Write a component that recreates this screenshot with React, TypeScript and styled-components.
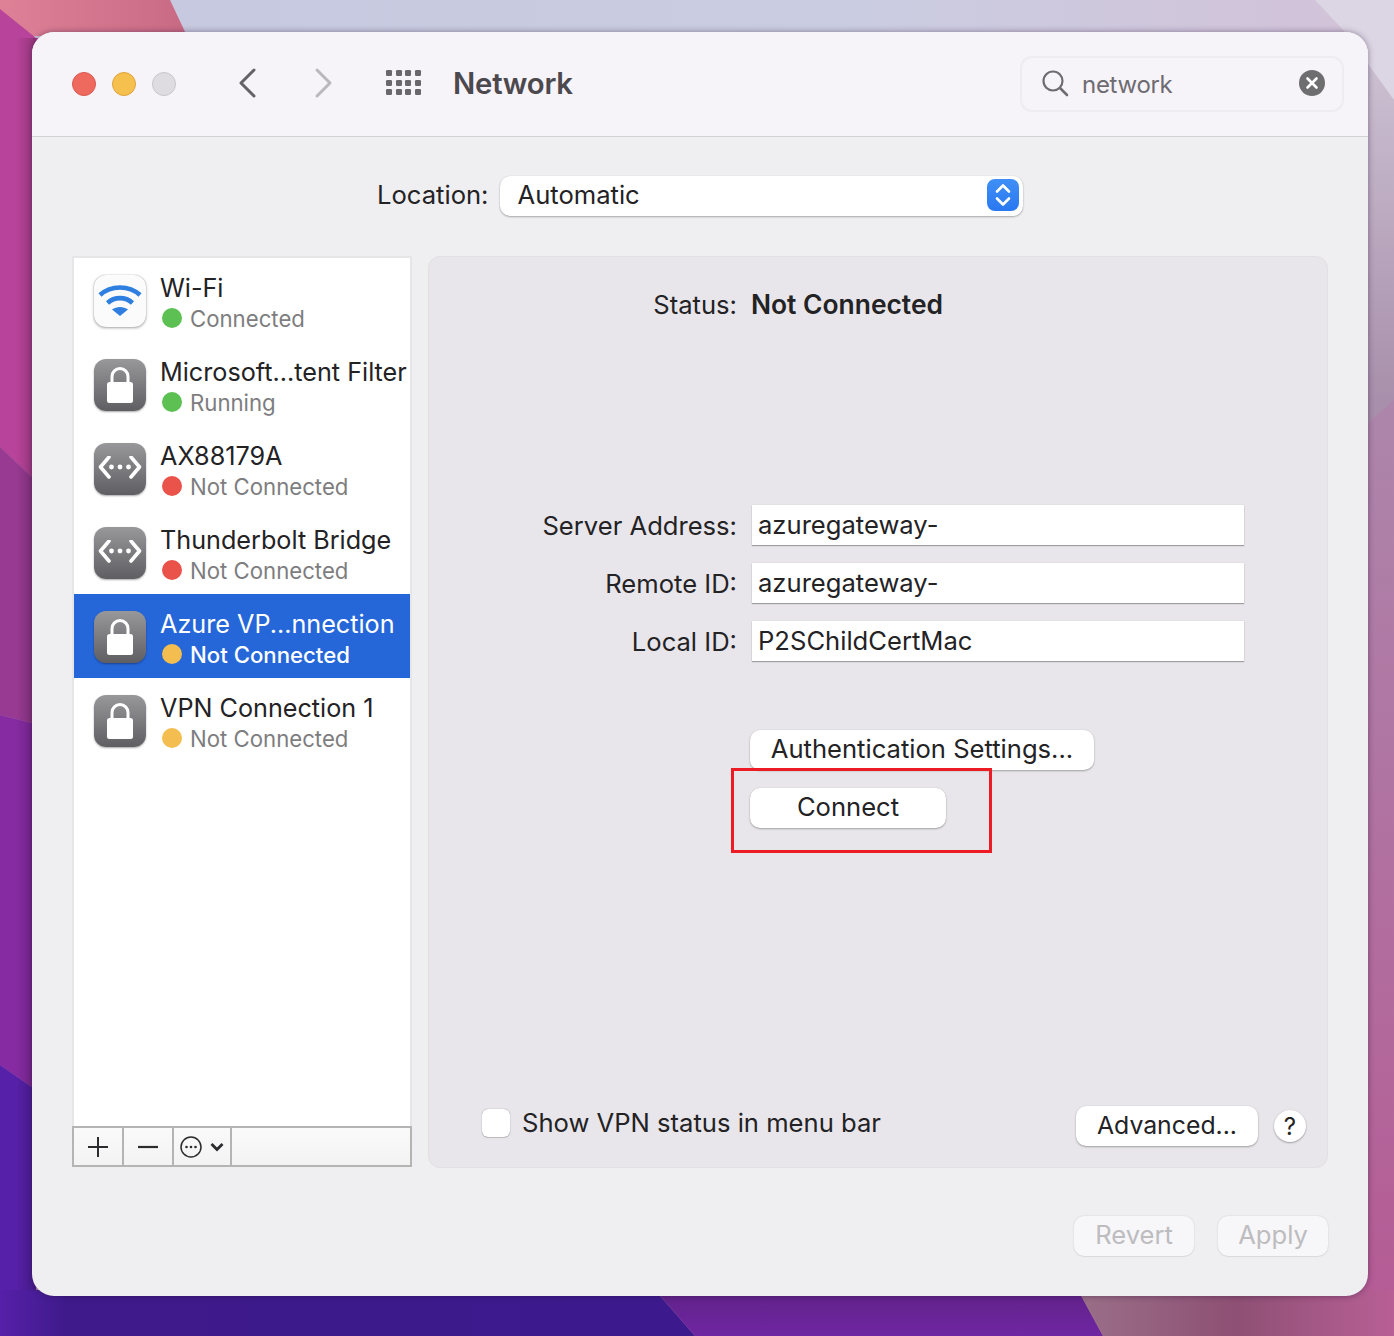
import React from 'react';
import styled, { createGlobalStyle } from 'styled-components';

const GlobalStyle = createGlobalStyle`
  html, body {
    margin: 0;
    padding: 0;
    background: #7a2d9b;
  }
  * {
    box-sizing: border-box;
  }
`;

const Desktop = styled.div`
  position: relative;
  width: 1394px;
  height: 1336px;
  padding: 32px 26px 40px 32px;
  overflow: hidden;
  font-family: Inter, "Liberation Sans", sans-serif;
  color: #232225;
`;

const WallpaperArt = styled.svg`
  position: absolute;
  inset: 0;
`;

const Window = styled.div`
  position: relative;
  width: 1336px;
  height: 1264px;
  display: flex;
  flex-direction: column;
  border-radius: 22px;
  overflow: hidden;
  background: #efeef1;
  box-shadow: 0 0 6px rgba(40, 20, 50, 0.45);
`;

const TitleBar = styled.header`
  height: 105px;
  flex: none;
  display: flex;
  align-items: center;
  padding: 0 24px 0 40px;
  background: #f6f3f9;
  border-bottom: 1px solid #d2d0d4;
`;

const Lights = styled.div`
  display: flex;
  gap: 16px;
`;

const Light = styled.span<{ $fill: string; $edge: string }>`
  width: 24px;
  height: 24px;
  border-radius: 50%;
  background: ${(p) => p.$fill};
  border: 1px solid ${(p) => p.$edge};
`;

const NavIcon = styled.svg<{ $left: number }>`
  flex: none;
  display: block;
  margin: 0 0 2px ${(p) => p.$left}px;
`;

const Title = styled.h1`
  margin: 0 0 2px 30px;
  font-size: 29.3px;
  font-weight: 600;
  color: #4b494e;
  letter-spacing: -0.2px;
`;

const SearchBox = styled.div`
  width: 324px;
  height: 56px;
  margin-left: auto;
  display: flex;
  align-items: center;
  padding: 0 17px 0 19px;
  border: 2px solid #eeebf1;
  border-radius: 12px;
`;

const SearchText = styled.span`
  margin: 1px 0 0 13px;
  font-size: 24px;
  letter-spacing: -0.3px;
  color: #6e6c71;
  flex: 1;
`;

const Content = styled.main`
  flex: 1;
  display: flex;
  flex-direction: column;
  padding: 38px 40px 40px;
`;

const LocationRow = styled.div`
  height: 41px;
  display: flex;
  align-items: center;
  padding-left: 305px;
  gap: 12px;
`;

const FieldLabel = styled.span`
  font-size: 25.6px;
  white-space: nowrap;
  padding-bottom: 2px;
`;

const Select = styled.div`
  width: 523px;
  height: 40px;
  display: flex;
  align-items: center;
  justify-content: space-between;
  padding: 0 4px 2px 17px;
  background: #fff;
  border-radius: 10px;
  font-size: 25.6px;
  box-shadow: 0 1px 2px rgba(0, 0, 0, 0.3), 0 0 1px rgba(0, 0, 0, 0.15);
`;

const Stepper = styled.span`
  width: 32px;
  height: 32px;
  display: flex;
  align-items: center;
  justify-content: center;
  border-radius: 8px;
  background: linear-gradient(#3f8ff7, #2a78f0);
`;

const Columns = styled.div`
  height: 912px;
  margin-top: 40px;
  display: flex;
  gap: 16px;
`;

const ServiceColumn = styled.section`
  width: 340px;
  flex: none;
  display: flex;
  flex-direction: column;
  margin-bottom: 1px;
  background: #fff;
  border: 2px solid #e6e5e8;
  border-bottom: 0;
`;

const ServiceList = styled.div`
  flex: 1;
`;

const Row = styled.div<{ $active?: boolean }>`
  height: 84px;
  display: flex;
  padding: 17px 0 0 20px;
  background: ${(p) => (p.$active ? '#2566d9' : 'transparent')};
  color: ${(p) => (p.$active ? '#fff' : '#232225')};
`;

const ServiceIcon = styled.div<{ $light?: boolean }>`
  width: 52px;
  height: 52px;
  flex: none;
  display: flex;
  align-items: center;
  justify-content: center;
  border-radius: 12px;
  background: ${(p) => (p.$light ? '#fbfbfc' : 'linear-gradient(#98989b, #5f5f63)')};
  box-shadow: ${(p) => (p.$light
    ? '0 1px 3px rgba(0, 0, 0, 0.35), 0 0 1px rgba(0, 0, 0, 0.3)'
    : '0 1px 2px rgba(0, 0, 0, 0.35)')};
`;

const RowText = styled.div`
  margin: -2px 0 0 14px;
  white-space: nowrap;
`;

const RowName = styled.div`
  font-size: 25.2px;
  line-height: 31px;
`;

const RowStatus = styled.div<{ $active?: boolean }>`
  display: flex;
  align-items: center;
  gap: 8px;
  padding-left: 2px;
  height: 28px;
  font-size: 22.2px;
  color: ${(p) => (p.$active ? '#fff' : '#7d7d80')};
  font-weight: ${(p) => (p.$active ? 500 : 400)};
`;

const Dot = styled.span<{ $color: string }>`
  width: 20px;
  height: 20px;
  border-radius: 50%;
  background: ${(p) => p.$color};
`;

const ListToolbar = styled.div`
  height: 41px;
  flex: none;
  display: flex;
  margin: 0 -2px;
  border: 2px solid #b4b4b4;
  background: linear-gradient(#fafafa, #f3f3f3);
`;

const ToolCell = styled.div<{ $width?: number }>`
  width: ${(p) => (p.$width ? `${p.$width}px` : 'auto')};
  flex: ${(p) => (p.$width ? 'none' : 1)};
  display: flex;
  align-items: center;
  justify-content: center;
  gap: 8px;
  border-right: 2px solid #b4b4b4;
  &:last-child {
    border-right: 0;
  }
`;

const DetailPanel = styled.section`
  flex: 1;
  display: flex;
  flex-direction: column;
  background: #e8e6ea;
  border: 1px solid #e1e0e3;
  border-radius: 12px;
  padding-top: 31px;
`;

const FormGrid = styled.div<{ $top?: number }>`
  display: grid;
  grid-template-columns: 308px 494px;
  column-gap: 14px;
  row-gap: 18px;
  align-items: center;
  margin-top: ${(p) => p.$top || 0}px;
`;

const RightLabel = styled.span`
  font-size: 25.6px;
  text-align: right;
  white-space: nowrap;
`;

const StatusValue = styled.span`
  font-size: 26.4px;
  font-weight: 600;
`;

const TextField = styled.div`
  height: 40px;
  margin: 0 1px;
  display: flex;
  align-items: center;
  padding: 0 0 1px 6px;
  font-size: 25.6px;
  background: #fff;
  box-shadow: 0 1px 1px rgba(0, 0, 0, 0.3), 0 0 1px rgba(0, 0, 0, 0.12);
`;

const ButtonStack = styled.div`
  display: flex;
  flex-direction: column;
  align-items: flex-start;
  gap: 18px;
  margin: 69px 0 0 321px;
`;

const Button = styled.div<{ $width: number; $size?: number }>`
  width: ${(p) => p.$width}px;
  height: 40px;
  flex: none;
  display: flex;
  align-items: center;
  justify-content: center;
  padding-bottom: 3px;
  background: #fff;
  border-radius: 10px;
  font-size: ${(p) => p.$size || 25.6}px;
  white-space: nowrap;
  box-shadow: 0 1px 2px rgba(0, 0, 0, 0.3), 0 0 1px rgba(0, 0, 0, 0.15);
`;

const Annotation = styled.div`
  position: absolute;
  left: 699px;
  top: 736px;
  width: 261px;
  height: 85px;
  border: 3px solid #ed1c24;
`;

const PanelFooter = styled.div`
  margin-top: auto;
  height: 40px;
  margin-bottom: 21px;
  display: flex;
  align-items: center;
  padding: 0 21px 0 53px;
`;

const Checkbox = styled.span`
  width: 28px;
  height: 28px;
  margin-top: -6px;
  background: #fff;
  border-radius: 6px;
  box-shadow: 0 0 1px rgba(0, 0, 0, 0.5), 0 1px 1px rgba(0, 0, 0, 0.15);
`;

const CheckLabel = styled.span`
  margin: -8px auto 0 12px;
  font-size: 25.6px;
`;

const HelpButton = styled.div`
  width: 32px;
  height: 32px;
  margin-left: 16px;
  display: flex;
  align-items: center;
  justify-content: center;
  border-radius: 50%;
  background: #fff;
  font-size: 24px;
  box-shadow: 0 1px 2px rgba(0, 0, 0, 0.3), 0 0 1px rgba(0, 0, 0, 0.15);
`;

const WindowActions = styled.div`
  margin-top: 48px;
  display: flex;
  justify-content: flex-end;
  gap: 24px;
`;

const DisabledButton = styled(Button)`
  background: #f7f6f9;
  color: #bdbcbf;
  box-shadow: 0 0 2px rgba(0, 0, 0, 0.14), 0 1px 1px rgba(0, 0, 0, 0.05);
`;

const Wallpaper = () => (
  <WallpaperArt width="1394" height="1336" viewBox="0 0 1394 1336">
    <defs>
      <linearGradient id="sky" x1="0" y1="0" x2="1" y2="0">
        <stop offset="0" stopColor="#c5c8de" />
        <stop offset="0.6" stopColor="#cacde2" />
        <stop offset="1" stopColor="#d3c2d8" />
      </linearGradient>
      <linearGradient id="right" x1="0" y1="0" x2="0" y2="1">
        <stop offset="0" stopColor="#d2c9d9" />
        <stop offset="0.3" stopColor="#a88fab" />
        <stop offset="1" stopColor="#a87fa0" />
      </linearGradient>
      <linearGradient id="rightLow" x1="0" y1="0" x2="0" y2="1">
        <stop offset="0" stopColor="#ad86ab" />
        <stop offset="1" stopColor="#b55a94" />
      </linearGradient>
      <linearGradient id="corner" x1="0" y1="0" x2="1" y2="0">
        <stop offset="0" stopColor="#9a6f88" />
        <stop offset="0.5" stopColor="#8e5074" />
        <stop offset="1" stopColor="#b85f96" />
      </linearGradient>
      <linearGradient id="blush" x1="0" y1="0" x2="1" y2="0">
        <stop offset="0" stopColor="#de8197" />
        <stop offset="1" stopColor="#c96a85" />
      </linearGradient>
      <linearGradient id="edge" x1="0" y1="0" x2="1" y2="0">
        <stop offset="0" stopColor="#000" stopOpacity="0" />
        <stop offset="1" stopColor="#000" stopOpacity="0.2" />
      </linearGradient>
      <linearGradient id="deep" x1="0" y1="0" x2="1" y2="0">
        <stop offset="0" stopColor="#5620a8" />
        <stop offset="0.1" stopColor="#3e1a8a" />
        <stop offset="1" stopColor="#3c1a8e" />
      </linearGradient>
      <linearGradient id="violet" x1="0" y1="0" x2="0" y2="1">
        <stop offset="0" stopColor="#5f2288" />
        <stop offset="1" stopColor="#7026a2" />
      </linearGradient>
    </defs>
    <rect width="1394" height="1336" fill="url(#right)" />
    <polygon points="1394,400 1360,430 1360,1336 1394,1336" fill="url(#rightLow)" />
    <polygon points="0,0 1394,0 1394,32 0,32" fill="url(#sky)" />
    <polygon points="1315,0 1394,0 1394,100 1345,32" fill="#dcd6e4" />
    <polygon points="0,0 170,0 187,36 0,36" fill="url(#blush)" />
    <polygon points="0,9 36,38 60,38 60,60 36,60 36,481 0,447" fill="#b8439a" />
    <polygon points="0,447 36,481 36,724 0,715" fill="#983a92" />
    <polygon points="0,715 36,724 36,1090 0,1065" fill="#862ba2" />
    <polygon points="0,1065 36,1090 36,1336 0,1336" fill="#5620a8" />
    <rect x="16" y="38" width="20" height="1252" fill="url(#edge)" />
    <polygon points="0,1290 655,1290 695,1336 0,1336" fill="url(#deep)" />
    <polygon points="655,1290 1078,1290 1103,1336 695,1336" fill="url(#violet)" />
    <polygon points="1078,1290 1394,1290 1394,1336 1103,1336" fill="url(#corner)" />
  </WallpaperArt>
);

const LockGlyph = () => (
  <svg width="26" height="36" viewBox="0 0 26 36">
    <path d="M5 17V9.500a8 8 0 0 1 16 0V17" fill="none" stroke="#fff" strokeWidth="3" />
    <rect x="0" y="15" width="26" height="21" rx="2.500" fill="#fff" />
  </svg>
);

const BridgeGlyph = () => (
  <svg width="44" height="26" viewBox="0 2 44 26">
    <path d="M11 3 2.500 13l8.500 10M33 3l8.500 10L33 23" fill="none" stroke="#fff" strokeWidth="3.600" strokeLinecap="round" strokeLinejoin="round" />
    <circle cx="13.500" cy="13" r="2.400" fill="#fff" />
    <circle cx="22" cy="13" r="2.400" fill="#fff" />
    <circle cx="30.500" cy="13" r="2.400" fill="#fff" />
  </svg>
);

const WifiGlyph = () => (
  <svg width="44" height="34" viewBox="0 0 44 34">
    <path d="M2 11C13 1 31 1 42 11" fill="none" stroke="#2e7fdf" strokeWidth="4.600" />
    <path d="M9.500 19c7-6.500 18-6.500 25 0" fill="none" stroke="#2e7fdf" strokeWidth="4.600" />
    <path d="M22 32 14 25.500c4.500-3.500 11.500-3.500 16 0z" fill="#2e7fdf" />
  </svg>
);

type RowData = {
  name: string;
  status: string;
  dot: string;
  icon: 'wifi' | 'lock' | 'bridge';
  active?: boolean;
};

const services: RowData[] = [
  { name: 'Wi-Fi', status: 'Connected', dot: '#5cc152', icon: 'wifi' },
  { name: 'Microsoft...tent Filter', status: 'Running', dot: '#5cc152', icon: 'lock' },
  { name: 'AX88179A', status: 'Not Connected', dot: '#e9534a', icon: 'bridge' },
  { name: 'Thunderbolt Bridge', status: 'Not Connected', dot: '#e9534a', icon: 'bridge' },
  { name: 'Azure VP...nnection', status: 'Not Connected', dot: '#f4bd50', icon: 'lock', active: true },
  { name: 'VPN Connection 1', status: 'Not Connected', dot: '#f4bd50', icon: 'lock' },
];

const App = () => (
  <Desktop>
    <GlobalStyle />
    <Wallpaper />
    <Window>
      <TitleBar>
        <Lights>
          <Light $fill="#ee6a5f" $edge="#d9584e" />
          <Light $fill="#f6c04f" $edge="#dfa63a" />
          <Light $fill="#dfdce1" $edge="#c9c6cb" />
        </Lights>
        <NavIcon $left={62} width="20" height="32" viewBox="0 0 20 32">
          <path d="M16 3 3 16l13 13" fill="none" stroke="#646266" strokeWidth="3" strokeLinecap="round" strokeLinejoin="round" />
        </NavIcon>
        <NavIcon $left={55} width="20" height="32" viewBox="0 0 20 32">
          <path d="M4 3l13 13L4 29" fill="none" stroke="#bab8bd" strokeWidth="3" strokeLinecap="round" strokeLinejoin="round" />
        </NavIcon>
        <NavIcon $left={52} width="38" height="28" viewBox="0 0 38 28">
          {[1, 11, 20, 30].map((x) => [1, 11, 20].map((y) => (
            <rect key={`${x}-${y}`} x={x} y={y} width="6" height="6" rx="1.2" fill="#69676c" />
          )))}
        </NavIcon>
        <Title>Network</Title>
        <SearchBox>
          <NavIcon $left={0} width="28" height="28" viewBox="0 0 28 28">
            <circle cx="12" cy="12" r="9.500" fill="none" stroke="#6e6c71" strokeWidth="2.200" />
            <path d="M19 19l7 7" stroke="#6e6c71" strokeWidth="2.600" strokeLinecap="round" />
          </NavIcon>
          <SearchText>network</SearchText>
          <NavIcon $left={0} width="26" height="26" viewBox="0 0 26 26">
            <circle cx="13" cy="13" r="13" fill="#6e6d70" />
            <path d="M8.500 8.500l9 9M17.500 8.500l-9 9" stroke="#fff" strokeWidth="2.600" strokeLinecap="round" />
          </NavIcon>
        </SearchBox>
      </TitleBar>
      <Content>
        <LocationRow>
          <FieldLabel>Location:</FieldLabel>
          <Select>
            Automatic
            <Stepper>
              <svg width="16" height="26" viewBox="0 0 16 26">
                <path d="M2 9.500 8 3.500l6 6M2 16.500l6 6 6-6" fill="none" stroke="#fff" strokeWidth="2.600" strokeLinecap="round" strokeLinejoin="round" />
              </svg>
            </Stepper>
          </Select>
        </LocationRow>
        <Columns>
          <ServiceColumn>
            <ServiceList>
              {services.map((s) => (
                <Row key={s.name} $active={s.active}>
                  <ServiceIcon $light={s.icon === 'wifi'}>
                    {s.icon === 'wifi' && <WifiGlyph />}
                    {s.icon === 'lock' && <LockGlyph />}
                    {s.icon === 'bridge' && <BridgeGlyph />}
                  </ServiceIcon>
                  <RowText>
                    <RowName>{s.name}</RowName>
                    <RowStatus $active={s.active}>
                      <Dot $color={s.dot} />
                      {s.status}
                    </RowStatus>
                  </RowText>
                </Row>
              ))}
            </ServiceList>
            <ListToolbar>
              <ToolCell $width={50}>
                <svg width="22" height="22" viewBox="0 0 22 22">
                  <path d="M11 1v20M1 11h20" stroke="#2c2c2e" strokeWidth="2" />
                </svg>
              </ToolCell>
              <ToolCell $width={50}>
                <svg width="22" height="22" viewBox="0 0 22 22">
                  <path d="M1 11h20" stroke="#2c2c2e" strokeWidth="2.200" />
                </svg>
              </ToolCell>
              <ToolCell $width={58}>
                <svg width="22" height="22" viewBox="0 0 22 22">
                  <circle cx="11" cy="11" r="10" fill="none" stroke="#2c2c2e" strokeWidth="1.500" />
                  <circle cx="6.500" cy="11" r="1.300" fill="#2c2c2e" />
                  <circle cx="11" cy="11" r="1.300" fill="#2c2c2e" />
                  <circle cx="15.500" cy="11" r="1.300" fill="#2c2c2e" />
                </svg>
                <svg width="14" height="10" viewBox="0 0 14 10">
                  <path d="M1.500 2 7 7.500 12.500 2" fill="none" stroke="#2c2c2e" strokeWidth="2.800" />
                </svg>
              </ToolCell>
              <ToolCell />
            </ListToolbar>
          </ServiceColumn>
          <DetailPanel>
            <FormGrid>
              <RightLabel>Status:</RightLabel>
              <StatusValue>Not Connected</StatusValue>
            </FormGrid>
            <FormGrid $top={185}>
              <RightLabel>Server Address:</RightLabel>
              <TextField>azuregateway-</TextField>
              <RightLabel>Remote ID:</RightLabel>
              <TextField>azuregateway-</TextField>
              <RightLabel>Local ID:</RightLabel>
              <TextField>P2SChildCertMac</TextField>
            </FormGrid>
            <ButtonStack>
              <Button $width={344}>Authentication Settings...</Button>
              <Button $width={196}>Connect</Button>
            </ButtonStack>
            <PanelFooter>
              <Checkbox />
              <CheckLabel>Show VPN status in menu bar</CheckLabel>
              <Button $width={182} $size={24.8}>Advanced...</Button>
              <HelpButton>?</HelpButton>
            </PanelFooter>
          </DetailPanel>
        </Columns>
        <WindowActions>
          <DisabledButton $width={120}>Revert</DisabledButton>
          <DisabledButton $width={110}>Apply</DisabledButton>
        </WindowActions>
      </Content>
      <Annotation />
    </Window>
  </Desktop>
);

export default App;
